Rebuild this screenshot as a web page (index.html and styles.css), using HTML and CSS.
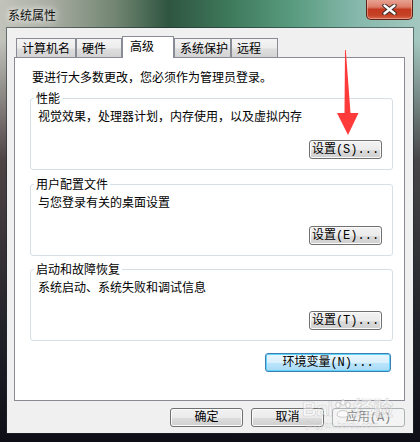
FILE: index.html
```html
<!DOCTYPE html>
<html lang="zh-CN">
<head>
<meta charset="utf-8">
<title>系统属性</title>
<link rel="stylesheet" href="styles.css">
</head>
<body>
<div class="window">
  <div class="titlebar"><span class="title">系统属性</span></div>
  <div class="close">
    <svg width="15" height="11" viewBox="0 0 15 11"><path d="M2.5 1.5 L12.5 9.5 M12.5 1.5 L2.5 9.5" stroke="#3a2a28" stroke-width="4.4" stroke-linecap="round"/><path d="M2.5 1.5 L12.5 9.5 M12.5 1.5 L2.5 9.5" stroke="#ffffff" stroke-width="2.4" stroke-linecap="round"/></svg>
  </div>
  <div class="client">
    <div class="tabs">
      <div class="tab t1">计算机名</div>
      <div class="tab t2">硬件</div>
      <div class="tab t3 selected">高级</div>
      <div class="tab t4">系统保护</div>
      <div class="tab t5">远程</div>
    </div>
    <div class="panel">
      <p class="intro">要进行大多数更改，您必须作为管理员登录。</p>
      <fieldset class="group">
        <legend>性能</legend>
        <div class="gbody">
          <p class="desc">视觉效果，处理器计划，内存使用，以及虚拟内存</p>
          <button class="btn">设置(S)...</button>
        </div>
      </fieldset>
      <fieldset class="group g2">
        <legend>用户配置文件</legend>
        <div class="gbody">
          <p class="desc">与您登录有关的桌面设置</p>
          <button class="btn">设置(E)...</button>
        </div>
      </fieldset>
      <fieldset class="group g3">
        <legend>启动和故障恢复</legend>
        <div class="gbody">
          <p class="desc">系统启动、系统失败和调试信息</p>
          <button class="btn">设置(T)...</button>
        </div>
      </fieldset>
      <button class="btn btn-default env">环境变量(N)...</button>
    </div>
    <div class="footer">
      <button class="btn">确定</button>
      <button class="btn">取消</button>
      <button class="btn disabled">应用(A)</button>
    </div>
  </div>
  <svg class="arrow" width="24" height="88" viewBox="0 0 24 88"><polygon points="9,1 9.8,1 14.5,64 22.5,64 12,86 1,64 8.5,64" fill="#ff3a3a"/></svg>
  <div class="watermark">
    <div class="wm-logo">Bai<svg width="20" height="20" viewBox="0 0 20 20"><g fill="rgba(255,255,255,0.6)" stroke="rgba(150,150,150,0.45)" stroke-width="1"><ellipse cx="5" cy="6" rx="2.2" ry="3"/><ellipse cx="10" cy="3.5" rx="2.2" ry="2.8"/><ellipse cx="15" cy="6" rx="2.2" ry="3"/><path d="M4 16 C4 10 16 10 16 16 C16 19 4 19 4 16 Z"/></g></svg>经验</div>
    <div class="wm-url">jingyan.baidu.com</div>
  </div>
</div>
</body>
</html>
```
FILE: styles.css
```css
* { box-sizing: border-box; }
html, body { margin: 0; padding: 0; }
body {
  width: 420px;
  height: 442px;
  overflow: hidden;
  font-family: "Noto Sans CJK SC", "Microsoft YaHei", sans-serif;
  font-size: 12px;
  line-height: 14px;
  color: #000;
}
.window {
  position: relative;
  width: 420px;
  height: 442px;
  display: flex;
  flex-direction: column;
  background:
    linear-gradient(to bottom, rgba(0,0,0,0) 0, rgba(0,0,0,0) 40px, rgba(40,25,30,0.75) 160px, rgba(20,20,28,0.92) 330px, #0e0f16 100%),
    linear-gradient(to right, #c2c4bc 0%, #a9ada2 12%, #6f8470 28%, #2f5540 40%, #3f7a5c 55%, #5a9c80 70%, #86b8ab 85%, #a4c8c0 100%);
}
.titlebar {
  height: 28px;
  padding: 2px 0 0 8px;
  display: flex;
  align-items: center;
}
.title {
  color: #111;
  text-shadow: 0 0 6px rgba(255,255,255,0.95), 0 0 10px rgba(255,255,255,0.8);
}
.close {
  position: absolute;
  top: -1px;
  right: 7px;
  width: 47px;
  height: 21px;
  border: 1px solid #5b2218;
  border-top: none;
  border-radius: 0 0 5px 5px;
  background: linear-gradient(to bottom, #e9a898 0%, #dc7c67 40%, #c4391f 52%, #c44125 80%, #d8654a 100%);
  box-shadow: inset 0 0 0 1px rgba(255,210,200,0.45);
  display: flex;
  align-items: center;
  justify-content: center;
}
.client {
  margin: 0 7px;
  height: 405px;
  background: #f0f0f0;
  box-shadow: 0 0 0 1px rgba(30,40,45,0.55);
  display: flex;
  flex-direction: column;
}
.tabs {
  display: flex;
  align-items: flex-end;
  height: 21px;
  margin: 8px 0 0 9px;
  position: relative;
  z-index: 1;
}
.tab {
  height: 19px;
  padding: 2px 0 0 5px;
  border: 1px solid #898c95;
  border-bottom: none;
  background: linear-gradient(to bottom, #f4f4f4 0%, #ececec 50%, #dedede 55%, #d3d3d3 100%);
  white-space: nowrap;
}
.tab.selected {
  height: 22px;
  margin-bottom: -1px;
  padding-left: 7px;
  background: #ffffff;
}
.t1 { width: 60px; }
.t2 { width: 46px; }
.t3 { width: 52px; }
.t4 { width: 57px; }
.t5 { width: 47px; }
.panel {
  margin-left: 7px;
  width: 391px;
  height: 344px;
  border: 1px solid #898c95;
  background: #ffffff;
  display: flex;
  flex-direction: column;
}
.intro {
  margin: 12px 0 0 17px;
}
p { margin: 0; }
.group {
  margin: 7px 11px 0 15px;
  padding: 0;
  border: 1px solid #d5dfe5;
  border-radius: 3px;
  min-width: 0;
}
.group.g3 { margin-top: 6px; }
.group legend {
  margin-left: 3px;
  padding: 0 2px;
  line-height: 14px;
}
.gbody {
  height: 64px;
  padding: 4px 10px 10px 7px;
  display: flex;
  flex-direction: column;
}
.gbody .btn {
  margin-top: auto;
  align-self: flex-end;
}
.btn {
  width: 73px;
  height: 19px;
  padding: 0;
  font-family: "Liberation Mono", "Noto Sans CJK SC", monospace;
  font-size: 12px;
  line-height: 14px;
  color: #000;
  border: 1px solid #707070;
  border-radius: 3px;
  background: linear-gradient(to bottom, #f2f2f2 0%, #ebebeb 50%, #dddddd 50%, #cfcfcf 100%);
  box-shadow: inset 0 0 0 1px #fbfbfb;
  white-space: nowrap;
}
.btn-default {
  border-color: #3c7fb1;
  background: linear-gradient(to bottom, #eaf6fd 0%, #d9f0fc 50%, #bee6fd 50%, #a7d9f5 100%);
  box-shadow: inset 0 0 0 1px #5fd3fb;
}
.env {
  width: 126px;
  margin: 12px 13px 0 0;
  align-self: flex-end;
}
.footer {
  display: flex;
  justify-content: flex-end;
  gap: 8px;
  margin: 7px 8px 0 0;
}
.btn.disabled {
  border-color: #adb2b5;
  background: #f4f4f4;
  box-shadow: none;
  color: #838383;
}
.arrow {
  position: absolute;
  left: 336px;
  top: 49px;
}
.watermark {
  position: absolute;
  left: 302px;
  top: 398px;
  color: rgba(255,255,255,0.55);
  -webkit-text-stroke: 0.6px rgba(150,150,150,0.4);
  font-family: "Liberation Sans", "Noto Sans CJK SC", sans-serif;
  pointer-events: none;
}
.wm-logo {
  display: flex;
  align-items: center;
  font-size: 20px;
  line-height: 22px;
  font-weight: bold;
}
.wm-url {
  font-size: 9px;
  line-height: 10px;
  margin-left: 4px;
  -webkit-text-stroke: 0.3px rgba(150,150,150,0.4);
}
```
